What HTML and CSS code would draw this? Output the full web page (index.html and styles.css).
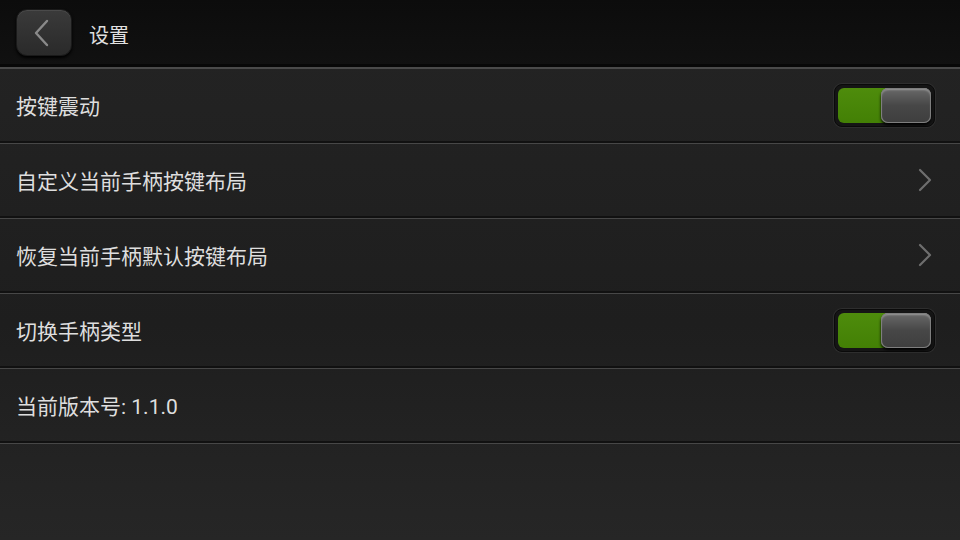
FILE: index.html
```html
<!DOCTYPE html>
<html lang="zh">
<head>
<meta charset="utf-8">
<link rel="stylesheet" href="styles.css">
</head>
<body>
<div class="app">
  <header class="topbar">
    <button class="back" aria-label="返回">
      <svg width="20" height="30" viewBox="0 0 20 30"><path d="M15 3 L4 15 L15 27" fill="none" stroke="#8a8a8a" stroke-width="2.4" stroke-linecap="round" stroke-linejoin="round"/></svg>
    </button>
    <span class="title">设置</span>
  </header>
  <ul class="list">
    <li class="row">
      <span class="label">按键震动</span>
      <span class="switch"><span class="on"></span><span class="knob"></span></span>
    </li>
    <li class="row">
      <span class="label">自定义当前手柄按键布局</span>
      <svg class="chev" width="14" height="24" viewBox="0 0 14 24"><path d="M2 2 L12 12 L2 22" fill="none" stroke="#6e6e6e" stroke-width="2.2" stroke-linecap="round" stroke-linejoin="round"/></svg>
    </li>
    <li class="row">
      <span class="label">恢复当前手柄默认按键布局</span>
      <svg class="chev" width="14" height="24" viewBox="0 0 14 24"><path d="M2 2 L12 12 L2 22" fill="none" stroke="#6e6e6e" stroke-width="2.2" stroke-linecap="round" stroke-linejoin="round"/></svg>
    </li>
    <li class="row">
      <span class="label">切换手柄类型</span>
      <span class="switch"><span class="on"></span><span class="knob"></span></span>
    </li>
    <li class="row">
      <span class="label">当前版本号: 1.1.0</span>
    </li>
  </ul>
</div>
</body>
</html>
```
FILE: styles.css
```css
* { box-sizing: border-box; }
html, body { margin: 0; padding: 0; }
body {
  width: 960px;
  height: 540px;
  overflow: hidden;
  background: linear-gradient(#242424, #1e1e1e 60%, #262626);
  font-family: Roboto, "Noto Sans CJK SC", sans-serif;
  color: #dcdcdc;
}
.app { display: flex; flex-direction: column; height: 540px; }
.topbar {
  height: 69px;
  display: flex;
  align-items: center;
  padding-left: 16px;
  background: linear-gradient(#0c0c0c, #111);
  border-bottom: 2px solid #4a4a4a;
  box-shadow: inset 0 -3px 0 #080808;
}
.back {
  width: 56px;
  height: 47px;
  margin-top: -2px;
  border-radius: 11px;
  border: 1px solid #1a1a1a;
  background: linear-gradient(#3a3a3a, #2a2a2a);
  box-shadow: inset 0 1px 0 #4a4a4a, 0 2px 3px #000;
  display: flex;
  align-items: center;
  justify-content: center;
  padding: 0 4px 0 0;
}
.title {
  margin-left: 17px;
  font-size: 20px;
  color: #e0e0e0;
  margin-top: 1px;
}
.list { list-style: none; margin: 0; padding: 0; }
.row {
  height: 75px;
  display: flex;
  align-items: center;
  justify-content: space-between;
  padding: 0 27px 0 16px;
  border-bottom: 1px solid #474747;
  box-shadow: inset 0 -2px 0 #111;
}
.label { font-size: 21px; color: #dedede; margin-top: -3px; }
.chev { margin-right: 1px; margin-top: -3px; }
.switch {
  position: relative;
  width: 101px;
  height: 43px;
  margin-right: -2px;
  margin-top: -1px;
  border-radius: 8px;
  background: #151515;
  border: 1px solid #0a0a0a;
  box-shadow: 0 0 0 1px #2e2e2e;
  display: flex;
  padding: 3px;
}
.on {
  flex: 1;
  border-radius: 6px 0 0 6px;
  background: linear-gradient(#4e8c0c, #438005);
  margin-right: -8px;
}
.knob {
  width: 50px;
  border-radius: 7px;
  background: linear-gradient(#6a6a6a, #474747 50%, #3e3e3e);
  box-shadow: inset 0 0 0 1px #7e7e7e, inset 0 2px 2px #999, 0 2px 3px #000;
  position: relative;
}
```
